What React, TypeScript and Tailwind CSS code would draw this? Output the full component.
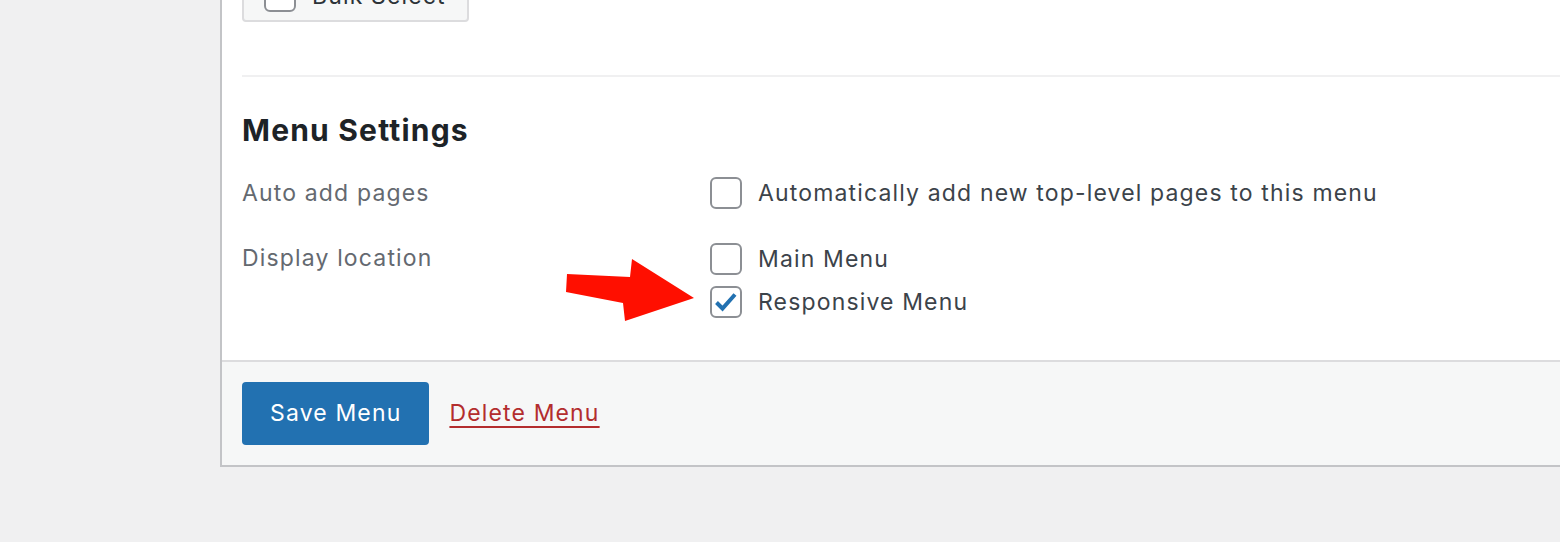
import React from "react";

function Checkbox({ checked = false }: { checked?: boolean }) {
  return (
    <span className="w-[32px] h-[32px] shrink-0 rounded-[6px] border-2 border-[#8c8f94] bg-white flex items-center justify-center">
      {checked && (
        <svg width="22" height="20" viewBox="0 0 22 20">
          <path d="M1.5 10.5 L7.5 16.5 L20 2.5" fill="none" stroke="#2271b1" strokeWidth="4" strokeLinejoin="miter" />
        </svg>
      )}
    </span>
  );
}

function Option({ label, checked }: { label: string; checked?: boolean }) {
  return (
    <label className="flex items-center gap-[16px] h-[32px]">
      <Checkbox checked={checked} />
      <span className="text-[23px] tracking-[0.05em] text-[#3c434a]">{label}</span>
    </label>
  );
}

export default function App() {
  return (
    <div
      className="w-[1560px] h-[542px] bg-[#f0f0f1] overflow-hidden"
      style={{ fontFamily: "Inter, 'Liberation Sans', sans-serif" }}
    >
      <div className="ml-[220px] w-[1400px] bg-white border-l-2 border-b-2 border-[#c3c4c7]">
        <div className="px-[20px]">
          {/* bulk select, cut off at the top */}
          <div className="-mt-[30px] h-[52px] w-[227px] rounded-[4px] border-2 border-[#dcdcde] bg-[#f6f7f7] flex items-center gap-[16px] px-[20px]">
            <span className="w-[32px] h-[32px] rounded-[6px] border-2 border-[#8c8f94] bg-white" />
            <span className="text-[23px] tracking-[0.05em] text-[#2c3338]">Bulk Select</span>
          </div>
          <div className="mt-[53px] h-[2px] bg-[#f0f0f1]" />

          <h3 className="mt-[33px] text-[30px] tracking-[0.04em] font-bold text-[#1d2327] leading-[40px]">Menu Settings</h3>

          <div className="mt-[27px] flex">
            <div className="w-[468px] text-[23px] tracking-[0.05em] text-[#646970] leading-[32px]">Auto add pages</div>
            <Option label="Automatically add new top-level pages to this menu" />
          </div>

          <div className="mt-[34px] flex pb-[42px]">
            <div className="w-[468px] text-[23px] tracking-[0.05em] text-[#646970] leading-[32px] -mt-[1px]">Display location</div>
            <div className="relative flex flex-col gap-[11px]">
              <Option label="Main Menu" />
              <Option label="Responsive Menu" checked />
              <svg
                className="absolute left-[-144px] top-[16px]"
                width="130"
                height="66"
                viewBox="566 258 130 66"
              >
                <polygon
                  points="567,273 630,276 632,258 694,297 625,320 623,302 566,291"
                  fill="#ff0f00"
                />
              </svg>
            </div>
          </div>
        </div>

        <div className="border-t-2 border-[#dcdcde] bg-[#f6f7f7] px-[20px] h-[105px] flex items-center gap-[20px]">
          <button className="h-[63px] px-[28px] rounded-[4px] bg-[#2271b1] text-white text-[23px] tracking-[0.05em]">Save Menu</button>
          <a href="#" className="text-[23px] tracking-[0.05em] text-[#b32d2e] underline underline-offset-[5px]">Delete Menu</a>
        </div>
      </div>
    </div>
  );
}
